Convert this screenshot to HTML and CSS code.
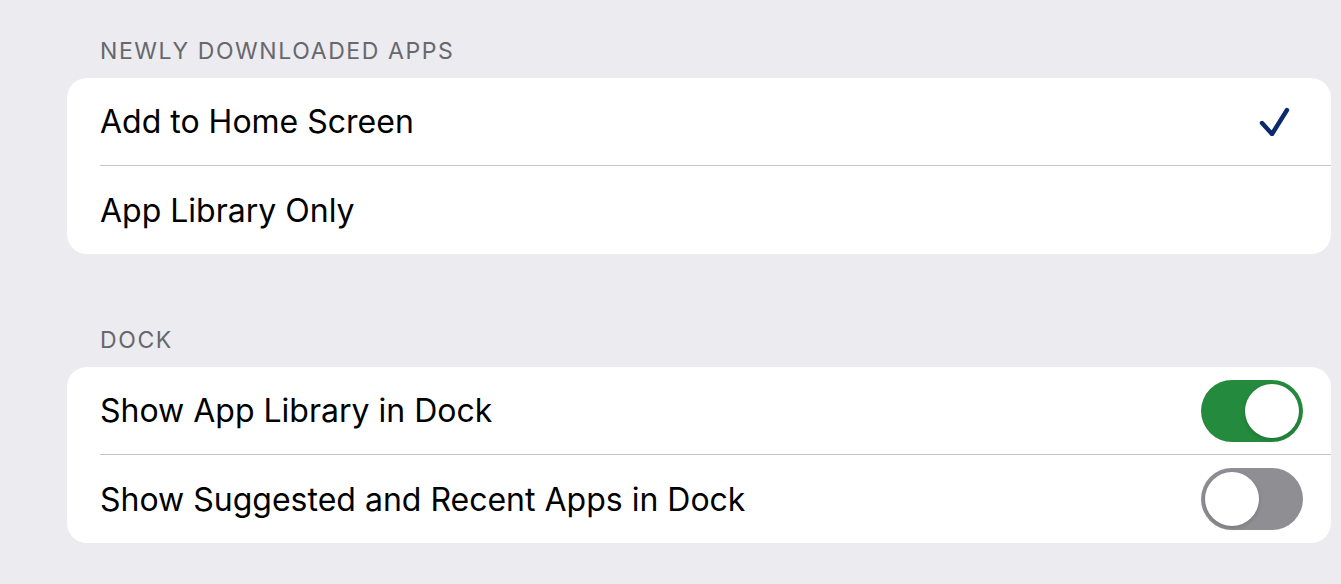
FILE: index.html
```html
<!DOCTYPE html>
<html>
<head>
<meta charset="utf-8">
<link rel="stylesheet" href="styles.css">
</head>
<body>
<div class="section">
  <div class="section-header">NEWLY DOWNLOADED APPS</div>
  <div class="card">
    <div class="row">
      <div class="row-inner">
        <span class="label">Add to Home Screen</span>
        <svg class="check" width="32" height="30" viewBox="0 0 32 30"><path d="M4 17 L14 28 L29 4" fill="none" stroke="#0b2a6e" stroke-width="4.4" stroke-linecap="round" stroke-linejoin="round"/></svg>
      </div>
    </div>
    <div class="row">
      <div class="row-inner">
        <span class="label">App Library Only</span>
      </div>
    </div>
  </div>
</div>
<div class="section section-second">
  <div class="section-header">DOCK</div>
  <div class="card">
    <div class="row">
      <div class="row-inner">
        <span class="label">Show App Library in Dock</span>
        <span class="toggle on"><span class="knob"></span></span>
      </div>
    </div>
    <div class="row">
      <div class="row-inner">
        <span class="label">Show Suggested and Recent Apps in Dock</span>
        <span class="toggle off"><span class="knob"></span></span>
      </div>
    </div>
  </div>
</div>
</body>
</html>
```
FILE: styles.css
```css
html, body {
  margin: 0;
  padding: 0;
}
body {
  background: #ebebf0;
  font-family: "Inter", "Liberation Sans", sans-serif;
  padding-top: 38px;
  height: 584px;
  box-sizing: border-box;
  overflow: hidden;
}
.section {
  margin-left: 67px;
  margin-right: 10px;
}
.section-second {
  margin-top: 73px;
}
.section-header {
  padding-left: 33px;
  font-size: 23px;
  line-height: 26px;
  padding-bottom: 14px;
  color: #67676c;
  letter-spacing: 1.6px;
}
.card {
  background: #ffffff;
  border-radius: 20px;
  overflow: hidden;
}
.row {
  padding-left: 33px;
  height: 88px;
}
.row-inner {
  height: 100%;
  box-sizing: border-box;
  display: flex;
  align-items: center;
  justify-content: space-between;
  padding-right: 28px;
}
.row:not(:last-child) .row-inner {
  border-bottom: 1px solid #c6c6c8;
}
.label {
  font-size: 32px;
  color: #000;
}
.check {
  margin-right: 13px;
  margin-top: -2px;
}
.toggle {
  position: relative;
  width: 102px;
  height: 62px;
  border-radius: 31px;
  display: block;
}
.toggle.on {
  background: #248a3d;
}
.toggle.off {
  background: #8e8e93;
}
.knob {
  position: absolute;
  top: 4px;
  width: 54px;
  height: 54px;
  border-radius: 50%;
  background: #fff;
  box-shadow: 0 2px 4px rgba(0,0,0,0.15);
}
.toggle.on .knob {
  left: 44px;
}
.toggle.off .knob {
  left: 4px;
}
```
